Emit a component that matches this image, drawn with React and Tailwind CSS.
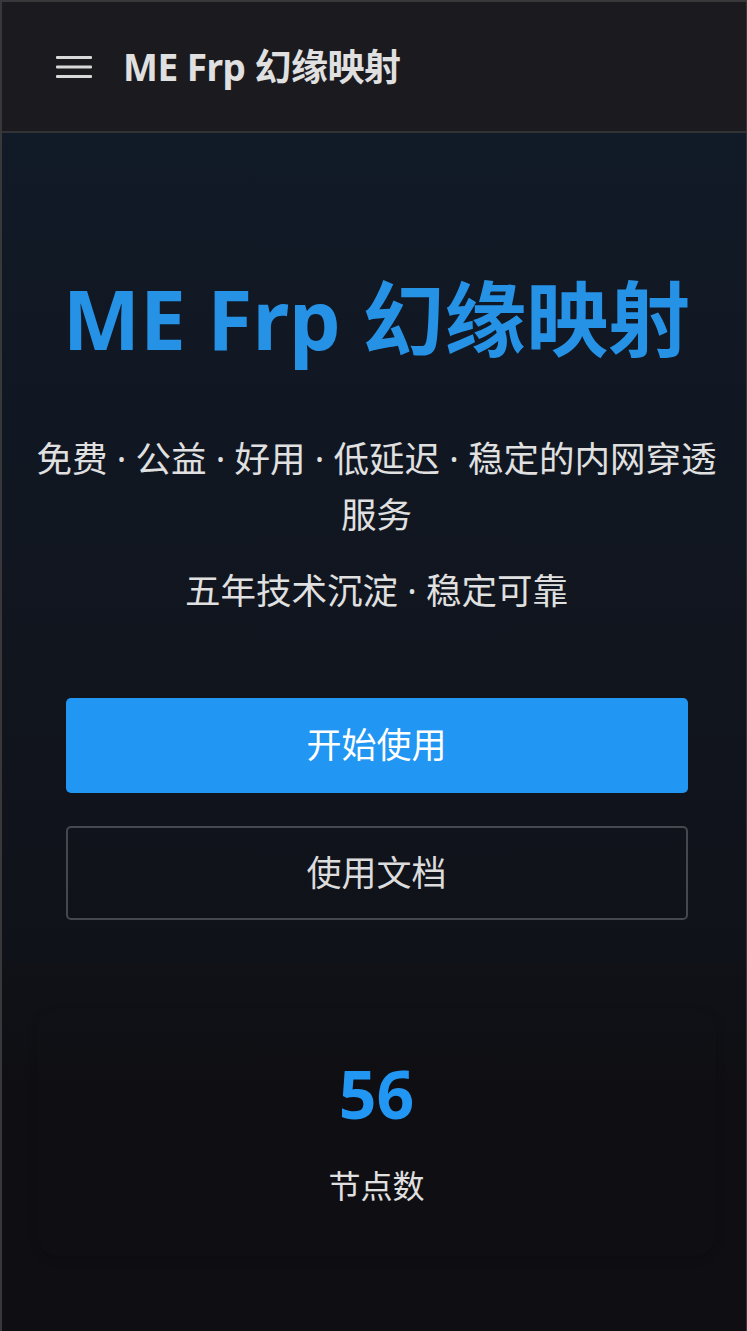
import React from "react";

const font = { fontFamily: '"Noto Sans", "Noto Sans CJK SC", sans-serif' };

const Menu = () => (
  <svg width="36" height="22" viewBox="0 0 36 22" className="shrink-0">
    <rect x="0" y="0" width="36" height="3" rx="1" fill="#d9d9d9" />
    <rect x="0" y="9.5" width="36" height="3" rx="1" fill="#d9d9d9" />
    <rect x="0" y="19" width="36" height="3" rx="1" fill="#d9d9d9" />
  </svg>
);

export default function App() {
  return (
    <div
      style={font}
      className="min-h-screen bg-[#0f0f13] border-t-2 border-l-2 border-r border-[#38383b] text-[#e2e2e2]"
    >
      {/* Header */}
      <header className="h-[131px] bg-[#1b1a1f] border-b-2 border-[#333336] flex items-center pl-[54px] gap-[31px]">
        <Menu />
        <span className="text-[37px] font-bold text-[#e0e0e0] tracking-[-0.5px]">
          ME Frp 幻缘映射
        </span>
      </header>

      {/* Hero */}
      <section className="bg-gradient-to-b from-[#111a27] to-[#101219] pt-[136px] pb-[42px] pl-[5px]">
        <h1 className="text-center text-[82px] leading-[98px] font-bold text-[#2592e6]">
          ME Frp 幻缘映射
        </h1>
        <p className="mt-[63px] px-[20px] text-center text-[35.5px] leading-[56px] text-[#e0e0e0]">
          免费 · 公益 · 好用 · 低延迟 · 稳定的内网穿透服务
        </p>
        <p className="mt-[20px] text-center text-[35.5px] leading-[56px] text-[#e0e0e0]">
          五年技术沉淀 · 稳定可靠
        </p>
        <div className="mt-[80px] mx-auto w-[622px] flex flex-col gap-[33px]">
          <button className="h-[95px] w-full rounded-[5px] bg-[#2196f3] text-white text-[35px]">
            开始使用
          </button>
          <button className="h-[94px] w-full rounded-[5px] border-2 border-[#45484f] bg-transparent text-[#dcdcdc] text-[35px]">
            使用文档
          </button>
        </div>
      </section>

      {/* Stats */}
      <section className="bg-gradient-to-b from-[#101218] to-[#0f0f13] to-[120px] pt-[47px] pb-[80px] pl-[5px]">
        <div className="mx-[30px] rounded-[22px] shadow-[0_3px_10px_rgba(0,0,0,0.18)] pt-[46px] pb-[46px] flex flex-col items-center">
          <div className="text-[66px] leading-[77px] font-bold text-[#2196f3]">56</div>
          <div className="mt-[30px] text-[32px] leading-[48px] text-[#e0e0e0]">节点数</div>
        </div>
      </section>
    </div>
  );
}
